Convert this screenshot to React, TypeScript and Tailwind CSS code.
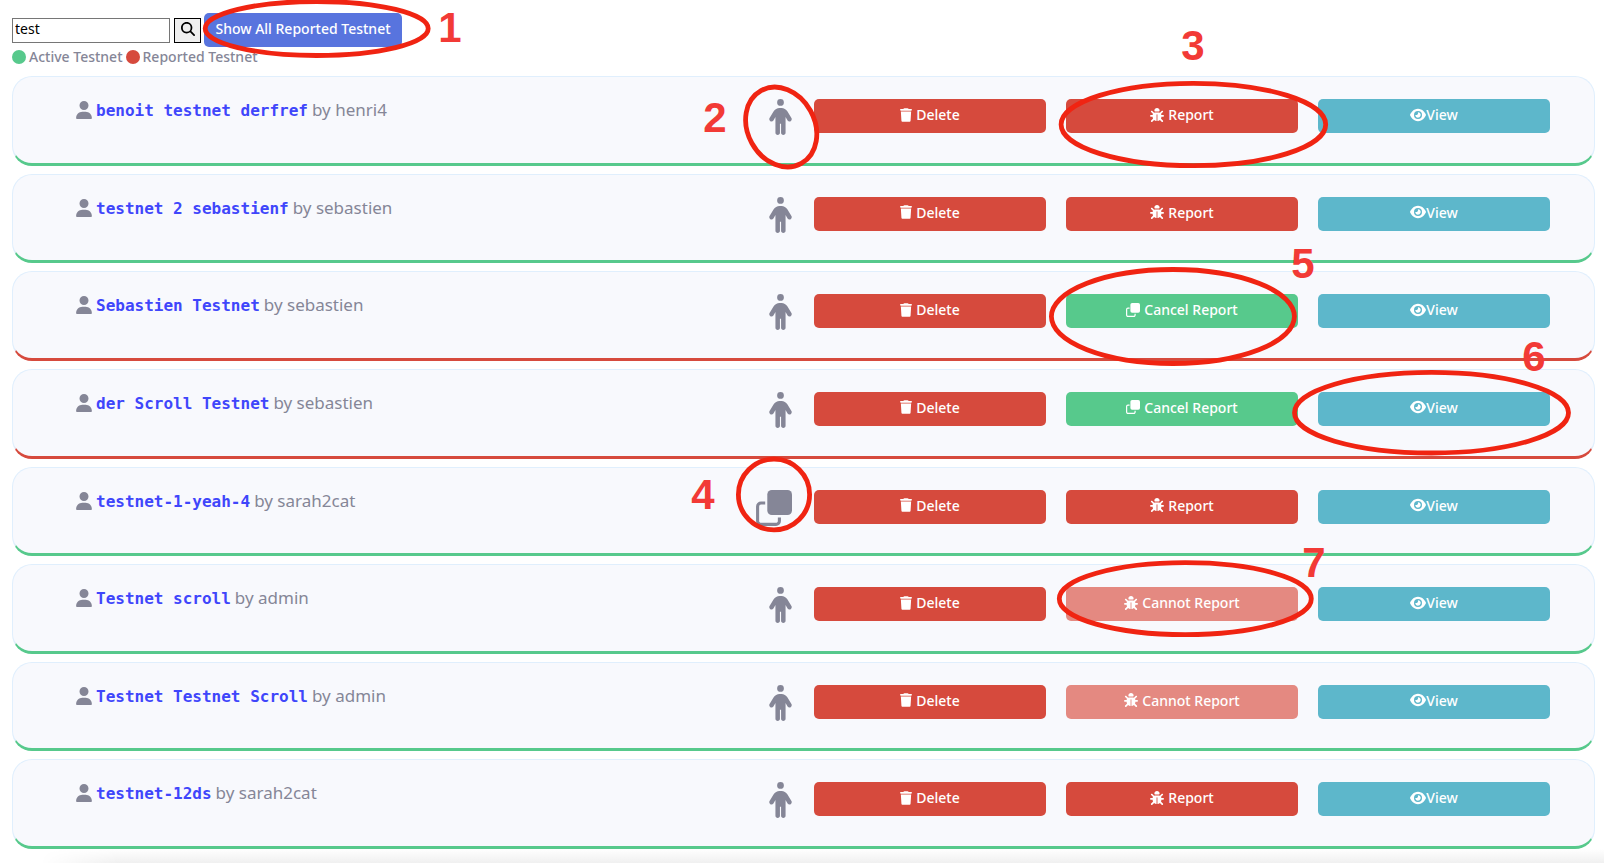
import { FaBug, FaCircle, FaEye, FaMagnifyingGlass, FaPerson, FaTrash, FaUser } from "react-icons/fa6";

type Report = "open" | "cancel" | "locked";

interface Testnet {
  title: string;
  owner: string;
  report: Report;
  shared?: boolean;
}

const testnets: Testnet[] = [
  { title: "benoit testnet derfref", owner: "henri4", report: "open" },
  { title: "testnet 2 sebastienf", owner: "sebastien", report: "open" },
  { title: "Sebastien Testnet", owner: "sebastien", report: "cancel" },
  { title: "der Scroll Testnet", owner: "sebastien", report: "cancel" },
  { title: "testnet-1-yeah-4", owner: "sarah2cat", report: "open", shared: true },
  { title: "Testnet scroll", owner: "admin", report: "locked" },
  { title: "Testnet Testnet Scroll", owner: "admin", report: "locked" },
  { title: "testnet-12ds", owner: "sarah2cat", report: "open" },
];

const buttonBase =
  "flex h-[34px] w-full items-center justify-center rounded-[5px] pb-[3px] text-[14px] font-medium text-white";

function CloneIcon({ className }: { className: string }) {
  return (
    <svg viewBox="0 0 36 36" className={className} aria-hidden="true">
      <rect x="11.3" y="0" width="24.7" height="25" rx="4.5" fill="currentColor" />
      <path
        d="M9.2 13H5A3.4 3.4 0 0 0 1.6 16.4V31A3.4 3.4 0 0 0 5 34.4H20A3.4 3.4 0 0 0 23.4 31V27.4"
        fill="none"
        stroke="currentColor"
        strokeWidth="3.1"
      />
    </svg>
  );
}

function ReportButton({ report }: { report: Report }) {
  if (report === "cancel") {
    return (
      <button type="button" className={`${buttonBase} gap-1 bg-[#57c98c]`}>
        <CloneIcon className="size-[14px]" />
        Cancel Report
      </button>
    );
  }
  if (report === "locked") {
    return (
      <button type="button" disabled className={`${buttonBase} gap-1 bg-[#e48981]`}>
        <FaBug className="size-[14px]" />
        Cannot Report
      </button>
    );
  }
  return (
    <button type="button" className={`${buttonBase} gap-1 bg-[#d64a3d]`}>
      <FaBug className="size-[14px]" />
      Report
    </button>
  );
}

function TestnetCard({ item }: { item: Testnet }) {
  const edge = item.report === "cancel" ? "border-b-[#d64a3d]" : "border-b-[#57c98c]";
  return (
    <li
      className={`grid grid-cols-6 items-start rounded-[20px] border border-b-[3px] border-[#e0effd] bg-[#f8f9fd] pt-[22px] pr-[34px] pl-[35px] ${edge}`}
    >
      <div className="col-span-3 flex items-start justify-between pr-[12px] pl-[28px]">
        <h2 className="flex h-[22px] items-center gap-1 text-[17px]">
          <FaUser className="h-[18px] w-[16px]" />
          <span className="flex items-baseline gap-1">
            <a
              href="#testnet"
              className="font-['DejaVu_Sans_Mono',monospace] text-[16px] font-bold text-[#3f46fb]"
            >
              {item.title}
            </a>
            <span>by {item.owner}</span>
          </span>
        </h2>
        {item.shared ? (
          <CloneIcon className="size-[36px]" />
        ) : (
          <FaPerson className="h-[36px] w-[23px]" />
        )}
      </div>
      <div className="px-[10px]">
        <button type="button" className={`${buttonBase} gap-1 bg-[#d64a3d]`}>
          <FaTrash className="h-[14px] w-[12px]" />
          Delete
        </button>
      </div>
      <div className="px-[10px]">
        <ReportButton report={item.report} />
      </div>
      <div className="px-[10px]">
        <button type="button" className={`${buttonBase} bg-[#5db7cb]`}>
          <FaEye className="size-[16px]" />
          View
        </button>
      </div>
    </li>
  );
}

const rings = [
  { cx: 316.7, cy: 28.5, rx: 111.5, ry: 27 },
  { cx: 781.2, cy: 127, rx: 41.6, ry: 33.5, turn: 61 },
  { cx: 1193.4, cy: 124.5, rx: 132.3, ry: 41.2 },
  { cx: 774, cy: 494.5, rx: 35.6, ry: 35.4 },
  { cx: 1172.9, cy: 316.5, rx: 121.5, ry: 47 },
  { cx: 1431.5, cy: 412.7, rx: 137, ry: 40.3 },
  { cx: 1185.3, cy: 598.7, rx: 126, ry: 36 },
];

const numbers = [
  { x: 450, y: 42 },
  { x: 715, y: 132 },
  { x: 1193, y: 60 },
  { x: 703, y: 509 },
  { x: 1303, y: 278 },
  { x: 1534, y: 371 },
  { x: 1314, y: 577 },
];

function Annotations() {
  return (
    <svg
      width="1604"
      height="863"
      viewBox="0 0 1604 863"
      className="pointer-events-none absolute top-0 left-0"
    >
      {rings.map((r, i) => (
        <ellipse
          key={i}
          cx={r.cx}
          cy={r.cy}
          rx={r.rx}
          ry={r.ry}
          transform={r.turn ? `rotate(${r.turn} ${r.cx} ${r.cy})` : undefined}
          fill="none"
          stroke="#f02412"
          strokeWidth="4.8"
        />
      ))}
      {numbers.map((n, i) => (
        <text
          key={i}
          x={n.x}
          y={n.y}
          textAnchor="middle"
          className="fill-[#f23a36] font-['Liberation_Sans',Arial,sans-serif] text-[42px] font-bold"
        >
          {i + 1}
        </text>
      ))}
    </svg>
  );
}

export default function App() {
  return (
    <div className="relative flex min-h-screen flex-col overflow-hidden bg-white font-['Noto_Sans',sans-serif] text-[#858697]">
      <header className="px-3 pt-[13px]">
        <form className="flex items-center" onSubmit={(e) => e.preventDefault()}>
          <input
            type="text"
            aria-label="Search testnets"
            defaultValue="test"
            className="h-[25px] w-[158px] border border-[#767676] bg-white px-[2px] pb-[3px] text-[14px] text-black outline-none"
          />
          <button
            type="submit"
            aria-label="Search"
            className="ml-1 flex h-[25px] w-[27px] items-center justify-center border border-black bg-[#efefef] pb-[3px] text-black"
          >
            <FaMagnifyingGlass className="size-[14px]" />
          </button>
          <button
            type="button"
            className="ml-[3px] h-[34px] w-[198px] rounded-[5px] bg-[#5874de] pb-[3px] text-[14px] font-medium text-white"
          >
            Show All Reported Testnet
          </button>
        </form>
        <div className="flex h-[19px] items-center gap-[3px] text-[14px] font-medium">
          <FaCircle className="size-[14px] text-[#57c98c]" />
          <span>Active Testnet</span>
          <FaCircle className="size-[14px] text-[#d64a3d]" />
          <span>Reported Testnet</span>
        </div>
      </header>
      <ul className="mt-[10px] mr-[9px] ml-3 grid flex-1 auto-rows-fr gap-2">
        {testnets.map((item) => (
          <TestnetCard key={item.title} item={item} />
        ))}
      </ul>
      <div className="ml-10 h-[14px] bg-linear-to-b from-white to-[#f0f0f0] mask-l-from-95%" />
      <Annotations />
    </div>
  );
}
